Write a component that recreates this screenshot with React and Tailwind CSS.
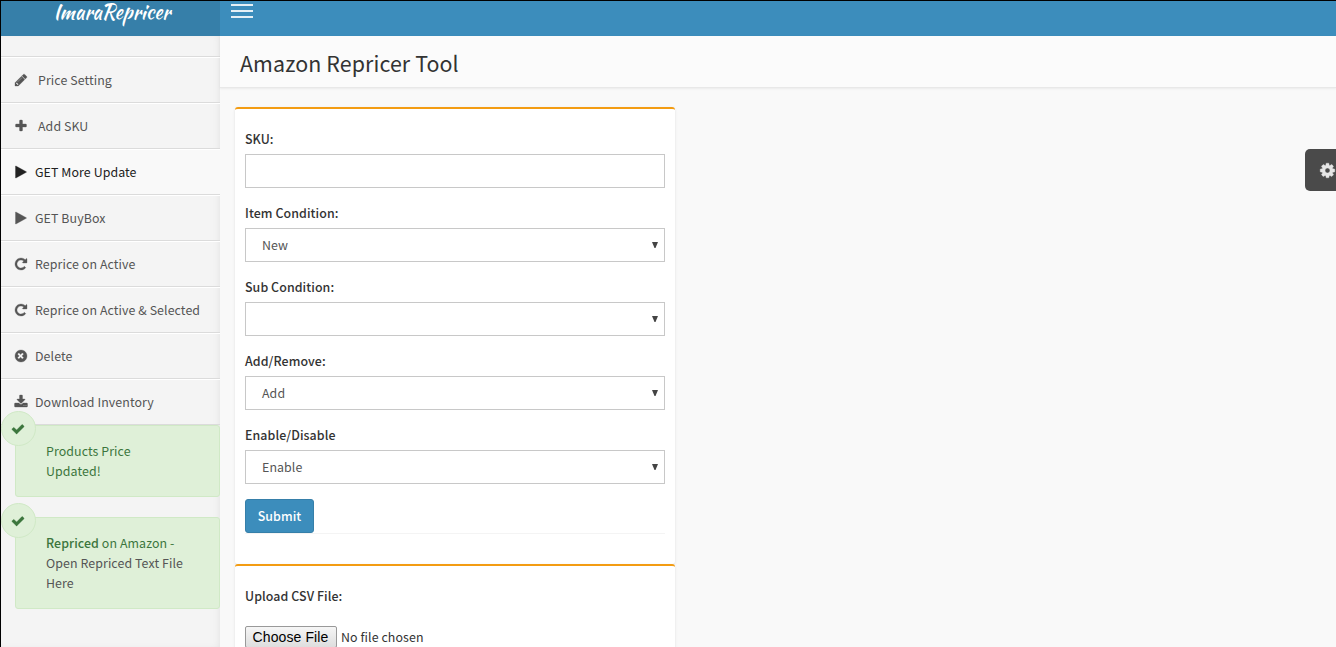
const Icon = ({ d, w = 1792, className = "" }) => (
  <svg viewBox={`0 0 ${w} 1792`} className={`h-[14px] shrink-0 overflow-visible ${className}`} fill="currentColor" stroke="currentColor" strokeWidth="40">
    <path d={d} />
  </svg>
);
const I = {
  pencil: "M491 1536l91-91-235-235-91 91v107h128v128h107zM1014 608q0-22-22-22-10 0-17 7l-542 542q-7 7-7 17 0 22 22 22 10 0 17-7l542-542q7-7 7-17zM960 416l416 416-832 832H128v-416zM1643 512q0 53-37 90l-166 166-416-416 166-165q36-38 90-38 53 0 91 38l235 234q37 39 37 91z",
  plus: "M1600 736v192q0 40-28 68t-68 28h-416v416q0 40-28 68t-68 28H800q-40 0-68-28t-28-68v-416H288q-40 0-68-28t-28-68V736q0-40 28-68t68-28h416V224q0-40 28-68t68-28h192q40 0 68 28t28 68v416h416q40 0 68 28t28 68z",
  play: "M1576 927L248 1665q-23 13-39.500 3t-16.500-36V160q0-26 16.500-36t39.500 3l1328 738q23 13 23 31t-23 31z",
  redo: "M1664 256v448q0 26-19 45t-45 19h-448q-42 0-59-40-17-39 14-69l138-138q-148-137-349-137-104 0-198.500 40.500T534 534 424.500 697.500 384 896t40.500 198.500T534 1258t163.500 109.500T896 1408q119 0 225-52t179-147q7-10 23-12 15 0 25 9l137 138q9 8 9.500 20.500t-7.500 22.500q-109 132-264 204.500T896 1664q-156 0-298-61t-245-164-164-245-61-298 61-298 164-245 245-164 298-61q147 0 284.500 55.500T1425 340l130-129q29-31 70-14 39 17 39 59z",
  close: "M1225 1111q0-26-19-45l-181-181 181-181q19-19 19-45 0-27-19-46l-90-90q-19-19-46-19-26 0-45 19L844 704 663 523q-19-19-45-19-27 0-46 19l-90 90q-19 19-19 46 0 26 19 45l181 181-181 181q-19 19-19 45 0 27 19 46l90 90q19 19 46 19 26 0 45-19l181-181 181 181q19 19 45 19 27 0 46-19l90-90q19-19 19-46zM1664 896q0 209-103 385.500T1281.500 1561 896 1664t-385.500-103T231 1281.500 128 896t103-385.500T510.500 231 896 128t385.500 103T1561 510.500 1664 896z",
  download: "M1344 1344q0-26-19-45t-45-19-45 19-19 45 19 45 45 19 45-19 19-45zM1600 1344q0-26-19-45t-45-19-45 19-19 45 19 45 45 19 45-19 19-45zM1728 1120v320q0 40-28 68t-68 28H160q-40 0-68-28t-28-68v-320q0-40 28-68t68-28h465l135 136q58 56 136 56t136-56l136-136h464q40 0 68 28t28 68zM1403 551q17 41-14 70l-448 448q-18 19-45 19t-45-19L403 621q-31-29-14-70 17-39 59-39h256V64q0-26 19-45t45-19h256q26 0 45 19t19 45v448h256q42 0 59 39z",
  check: "M1671 566q0 40-28 68l-724 724-136 136q-28 28-68 28t-68-28l-136-136-362-362q-28-28-28-68t28-68l136-136q28-28 68-28t68 28l294 295 656-657q28-28 68-28t68 28l136 136q28 28 28 68z",
  cog: "M1152 896q0-106-75-181t-181-75-181 75-75 181 75 181 181 75 181-75 75-181zM1664 787v222q0 12-8 23t-20 13l-185 28q-19 54-39 91 35 50 107 138 10 12 10 25t-9 23q-27 37-99 108t-94 71q-12 0-26-9l-138-108q-44 23-91 38-16 136-29 186-7 28-36 28H785q-14 0-24.500-8.500T749 1634l-28-184q-49-16-90-37l-141 107q-10 9-25 9-14 0-25-11-126-114-165-168-7-10-7-23 0-12 8-23 15-21 51-66.500t54-70.500q-27-50-41-99l-183-27q-13-2-21-12.500t-8-23.500V783q0-12 8-23t19-13l186-28q14-46 39-92-40-57-107-138-10-12-10-24 0-10 9-23 26-36 98.500-107.500T465 263q13 0 26 10l138 107q44-23 91-38 16-136 29-186 7-28 36-28h222q14 0 24.500 8.500T1043 158l28 184q49 16 90 37l142-107q9-9 24-9 13 0 25 10 129 119 165 170 7 8 7 22 0 12-8 23-15 21-51 66.500t-54 70.500q26 50 41 98l183 28q13 2 21 12.500t8 23.500z",
};
const nav = [
  ["pencil", "Price Setting", "gap-[10px]"],
  ["plus", "Add SKU", "gap-[10px]"],
  ["play", "GET More Update", "gap-[7px]", true],
  ["play", "GET BuyBox", "gap-[7px]"],
  ["redo", "Reprice on Active", "gap-[7px]"],
  ["redo", "Reprice on Active & Selected", "gap-[7px]"],
  ["close", "Delete", "gap-[7px]"],
  ["download", "Download Inventory", "gap-[7px]"],
];
const Notice = ({ children }) => (
  <div className="relative mb-5 ml-[14px] rounded-[3px] border border-[#d0e9c6] bg-[#dff0d8] py-[15px] pr-[30px] pl-[30px] text-[#3c763d]">
    <div className="absolute -top-[15px] -left-[15px] flex size-[35px] items-center justify-center rounded-full border border-[#d0e9c6] bg-[#dff0d8]">
      <Icon d={I.check} className="mr-px" />
    </div>
    {children}
  </div>
);
const Label = ({ children }) => <div className="h-5 font-medium text-[#333]">{children}</div>;
const Select = ({ label, value }) => (
  <div className="mb-[15px]">
    <Label>{label}</Label>
    <div className="mt-[5px] flex h-[34px] items-center justify-between border border-[#c8c8c8] bg-white pr-[6px] pl-4 text-[#555]">
      <span>{value}</span>
      <svg viewBox="0 0 6 6" className="mb-px h-[6px] w-[6px]" fill="#444"><path d="M0 0h6L3.500 6h-1z" /></svg>
    </div>
  </div>
);

export default function App() {
  return (
    <div className="h-[647px] w-[1336px] overflow-hidden border-t border-l border-black bg-[#f9f9f9] font-['Noto_Sans_CJK_SC',sans-serif] text-[12.400px] leading-5 tracking-[0.08px] text-[#333]">
      <header className="flex h-[35px] bg-[#3c8dbc] text-white">
        <div className="flex w-[219px] items-start justify-center bg-[#367fa9] pl-[3px]">
          <span className="font-['Kaushan_Script',cursive] text-[20px] leading-[22px] tracking-[0.1px]">ImaraRepricer</span>
        </div>
        <div className="ml-[11px] mt-[3px] flex w-[22px] flex-col gap-[4px]">
          <i className="h-[2px] bg-[#e5f0f6]" /><i className="h-[2px] bg-[#e5f0f6]" /><i className="h-[2px] bg-[#e5f0f6]" />
        </div>
      </header>
      <div className="flex h-[611px]">
        <aside className="w-[219px] shrink-0 bg-[#f4f4f4] pt-5 shadow-[inset_-3px_0_8px_-4px_rgba(0,0,0,0.1)]">
          <nav className="border-t border-[#dbdbdb]">
            {nav.map(([icon, text, gap, active]) => (
              <div key={text} className={`flex h-[46px] items-center border-t border-b border-t-white border-b-[#dbdbdb] pl-[13px] ${gap} ${active ? "bg-[#f9f9f9] text-[#222]" : "text-[#555]"}`}>
                <Icon d={I[icon]} />
                <span>{text}</span>
              </div>
            ))}
          </nav>
          <Notice><p>Products Price<br />Updated!</p></Notice>
          <Notice><p><b className="font-medium">Repriced</b> on Amazon -<br /><span className="text-[#555]">Open Repriced Text File<br />Here</span></p></Notice>
        </aside>
        <main className="flex-1">
          <div className="h-[52px] border-b border-[#e8e8e8] bg-[#fbfbfb] pt-[14px] pl-5 shadow-[0_1px_2px_rgba(0,0,0,0.06)]">
            <h1 className="text-[21.400px] leading-[26px] tracking-[0.1px]">Amazon Repricer Tool</h1>
          </div>
          <div className="mt-[19px] ml-[15px] w-[440px]">
            <section className="h-[457px] rounded-[3px] border-t-2 border-[#f39c12] bg-white px-[10px] pt-5 shadow-[0_1px_3px_rgba(0,0,0,0.1)]">
              <Label>SKU:</Label>
              <div className="mt-[5px] mb-[15px] h-[34px] border border-[#c8c8c8]" />
              <Select label="Item Condition:" value="New" />
              <Select label="Sub Condition:" value="" />
              <Select label="Add/Remove:" value="Add" />
              <Select label="Enable/Disable" value="Enable" />
              <div className="flex h-[35px] border-b border-[#f4f4f4]">
                <button className="h-[34px] w-[69px] rounded-[3px] border border-[#367fa9] bg-[#3c8dbc] font-medium text-white">Submit</button>
              </div>
            </section>
            <section className="h-[120px] rounded-[3px] border-t-2 border-[#f39c12] bg-white px-[10px] pt-5 shadow-[0_1px_3px_rgba(0,0,0,0.1)]">
              <Label>Upload CSV File:</Label>
              <div className="mt-5 flex items-center gap-1">
                <span className="flex h-[22px] w-[92px] items-center justify-center rounded-[2px] border border-[#999] bg-linear-to-b from-[#f6f6f6] to-[#dedede] pr-px font-['Liberation_Sans',sans-serif] text-[14px] tracking-[0.1px] text-black">Choose File</span>
                <span>No file chosen</span>
              </div>
            </section>
          </div>
        </main>
        <div className="absolute top-[149px] left-[1305px] flex h-[42px] w-[31px] items-center rounded-l-[5px] bg-[#4a4a4a] pl-[14px] text-[#e5e5e5]">
          <Icon d={I.cog} className="h-[17px] w-[17px]" />
        </div>
      </div>
    </div>
  );
}
